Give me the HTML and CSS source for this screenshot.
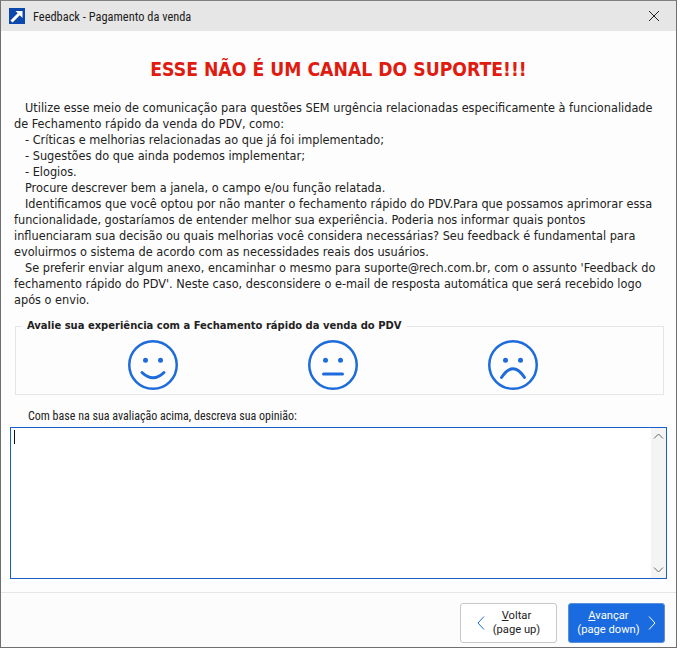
FILE: index.html
```html
<!DOCTYPE html>
<html lang="pt-BR">
<head>
<meta charset="utf-8">
<title>Feedback - Pagamento da venda</title>
<link rel="stylesheet" href="styles.css">
</head>
<body>
<div class="window">
  <header class="titlebar">
    <svg class="app-icon" width="16" height="16" viewBox="0 0 16 16"><rect width="16" height="16" fill="#0b47ad"/><path d="M2.5 13.5 L10 6" stroke="#fff" stroke-width="3" fill="none"/><path d="M6.5 3 H13.5 V10 Z" fill="#fff"/></svg>
    <span class="title">Feedback - Pagamento da venda</span>
    <svg class="close" width="12" height="12" viewBox="0 0 12 12"><path d="M1 1 L11 11 M11 1 L1 11" stroke="#222" stroke-width="1" fill="none"/></svg>
  </header>
  <main class="content">
    <h1 class="heading">ESSE NÃO É UM CANAL DO SUPORTE!!!</h1>
    <div class="message">
      <p class="ind">Utilize esse meio de comunicação para questões SEM urgência relacionadas especificamente à funcionalidade</p>
      <p>de Fechamento rápido da venda do PDV, como:</p>
      <p class="ind">- Críticas e melhorias relacionadas ao que já foi implementado;</p>
      <p class="ind">- Sugestões do que ainda podemos implementar;</p>
      <p class="ind">- Elogios.</p>
      <p class="ind">Procure descrever bem a janela, o campo e/ou função relatada.</p>
      <p class="ind">Identificamos que você optou por não manter o fechamento rápido do PDV.Para que possamos aprimorar essa</p>
      <p>funcionalidade, gostaríamos de entender melhor sua experiência. Poderia nos informar quais pontos</p>
      <p>influenciaram sua decisão ou quais melhorias você considera necessárias? Seu feedback é fundamental para</p>
      <p>evoluirmos o sistema de acordo com as necessidades reais dos usuários.</p>
      <p class="ind">Se preferir enviar algum anexo, encaminhar o mesmo para suporte@rech.com.br, com o assunto 'Feedback do</p>
      <p>fechamento rápido do PDV'. Neste caso, desconsidere o e-mail de resposta automática que será recebido logo</p>
      <p>após o envio.</p>
    </div>
    <fieldset class="rating">
      <legend class="rating-label">Avalie sua experiência com a Fechamento rápido da venda do PDV</legend>
      <svg class="face" width="50" height="50" viewBox="0 0 50 50"><circle cx="25" cy="25" r="23.75" class="ln"/><circle cx="17.5" cy="20.3" r="2.5" class="dot"/><circle cx="32.5" cy="20.3" r="2.5" class="dot"/><path d="M14 32.5 Q25 43 36 32.5" class="ln round"/></svg>
      <svg class="face" width="50" height="50" viewBox="0 0 50 50"><circle cx="25" cy="25" r="23.75" class="ln"/><circle cx="17.5" cy="20.3" r="2.5" class="dot"/><circle cx="32.5" cy="20.3" r="2.5" class="dot"/><path d="M15.5 34 H34.5" class="ln round"/></svg>
      <svg class="face" width="50" height="50" viewBox="0 0 50 50"><circle cx="25" cy="25" r="23.75" class="ln"/><circle cx="17.5" cy="20.3" r="2.5" class="dot"/><circle cx="32.5" cy="20.3" r="2.5" class="dot"/><path d="M13.5 37.5 Q25 20 36.5 37.5" class="ln round"/></svg>
    </fieldset>
    <label class="prompt">Com base na sua avaliação acima, descreva sua opinião:</label>
    <div class="editor">
      <span class="caret"></span>
      <div class="scrollbar">
        <svg width="11" height="6" viewBox="0 0 11 6"><path d="M1 5.5 L5.5 1 L10 5.5" class="chev"/></svg>
        <svg width="11" height="6" viewBox="0 0 11 6"><path d="M1 .5 L5.5 5 L10 .5" class="chev"/></svg>
      </div>
    </div>
  </main>
  <footer class="footer">
    <button class="btn">
      <svg width="8" height="14" viewBox="0 0 8 14"><path d="M7 .5 L1 7 L7 13.5" class="arrow-blue"/></svg>
      <span class="btn-text"><span><u>V</u>oltar</span><span>(page up)</span></span>
    </button>
    <button class="btn primary">
      <span class="btn-text"><span><u>A</u>vançar</span><span>(page down)</span></span>
      <svg width="8" height="14" viewBox="0 0 8 14"><path d="M1 .5 L7 7 L1 13.5" class="arrow-white"/></svg>
    </button>
  </footer>
</div>
</body>
</html>
```
FILE: styles.css
```css
* { box-sizing: border-box; }
html, body { margin: 0; padding: 0; background: #fff; }
body { font-family: "DejaVu Sans", sans-serif; font-stretch: condensed; font-size: 12.6px; color: #222; }
.window { width: 677px; height: 648px; border: 1px solid #6f6f6f; border-top-color: #808080; display: flex; flex-direction: column; background: #fdfdfd; }
.titlebar { height: 30px; background: #e6e6e6; display: flex; align-items: center; padding: 0 16px 0 8px; flex: none; }
.app-icon { flex: none; }
.title { margin-left: 8px; flex: 1; color: #1c1c1c; font-family: Roboto, sans-serif; font-size: 12.4px; }
.content { flex: 1; padding: 0 9px; display: flex; flex-direction: column; min-height: 0; }
.heading { margin: 27px 0 0; height: 24px; line-height: 24px; text-align: center; color: #e01b10; font-size: 19.2px; font-weight: 700; }
.message { margin: 18px 0 0 4px; line-height: 16px; }
.message p { margin: 0; white-space: nowrap; }
.message .ind { padding-left: 11px; }
.rating { margin: 11px 3px 0 5px; height: 76px; padding: 7px 14px 0 0; border: 1px solid #e6e6e6; display: flex; justify-content: center; gap: 130px; align-items: flex-start; }
.rating-label { font-weight: 700; font-size: 11.1px; margin-left: 6px; padding: 0 5px; line-height: 14px; color: #222; }
.face { display: block; }
.ln { fill: none; stroke: #1e6cdc; stroke-width: 2.5; }
.round { stroke-linecap: round; stroke-width: 3; }
.dot { fill: #1e6cdc; }
.prompt { display: block; margin: 13px 0 0 18px; line-height: 16px; font-family: Roboto, sans-serif; font-size: 12px; }
.editor { margin-top: 3px; width: 657px; height: 152px; border: 1px solid #1860c8; background: #fff; display: flex; justify-content: space-between; padding-left: 3px; }
.caret { width: 1px; height: 14px; margin-top: 2px; background: #111; }
.scrollbar { width: 15px; background: #f4f4f4; display: flex; flex-direction: column; justify-content: space-between; align-items: center; padding: 5px 0; }
.chev { fill: none; stroke: #666; stroke-width: 1; }
.footer { flex: none; height: 55px; border-top: 1px solid #e6e6e6; background: #fcfcfc; display: flex; justify-content: flex-end; gap: 11px; padding: 10px 11px 0 0; }
.btn { width: 97px; height: 40px; border: 1px solid #c8c8c8; border-radius: 3px; background: #fff; color: #222; font-family: Roboto, sans-serif; font-size: 11.2px; line-height: 14px; display: flex; align-items: center; justify-content: center; gap: 8px; padding: 0; }
.btn.primary { background: #1a6be0; border-color: #5b8fd8; color: #fff; gap: 8px; }
.btn-text { display: flex; flex-direction: column; align-items: center; }
.arrow-blue { fill: none; stroke: #1e6cdc; stroke-width: 1; }
.arrow-white { fill: none; stroke: #fff; stroke-width: 1; }
```
